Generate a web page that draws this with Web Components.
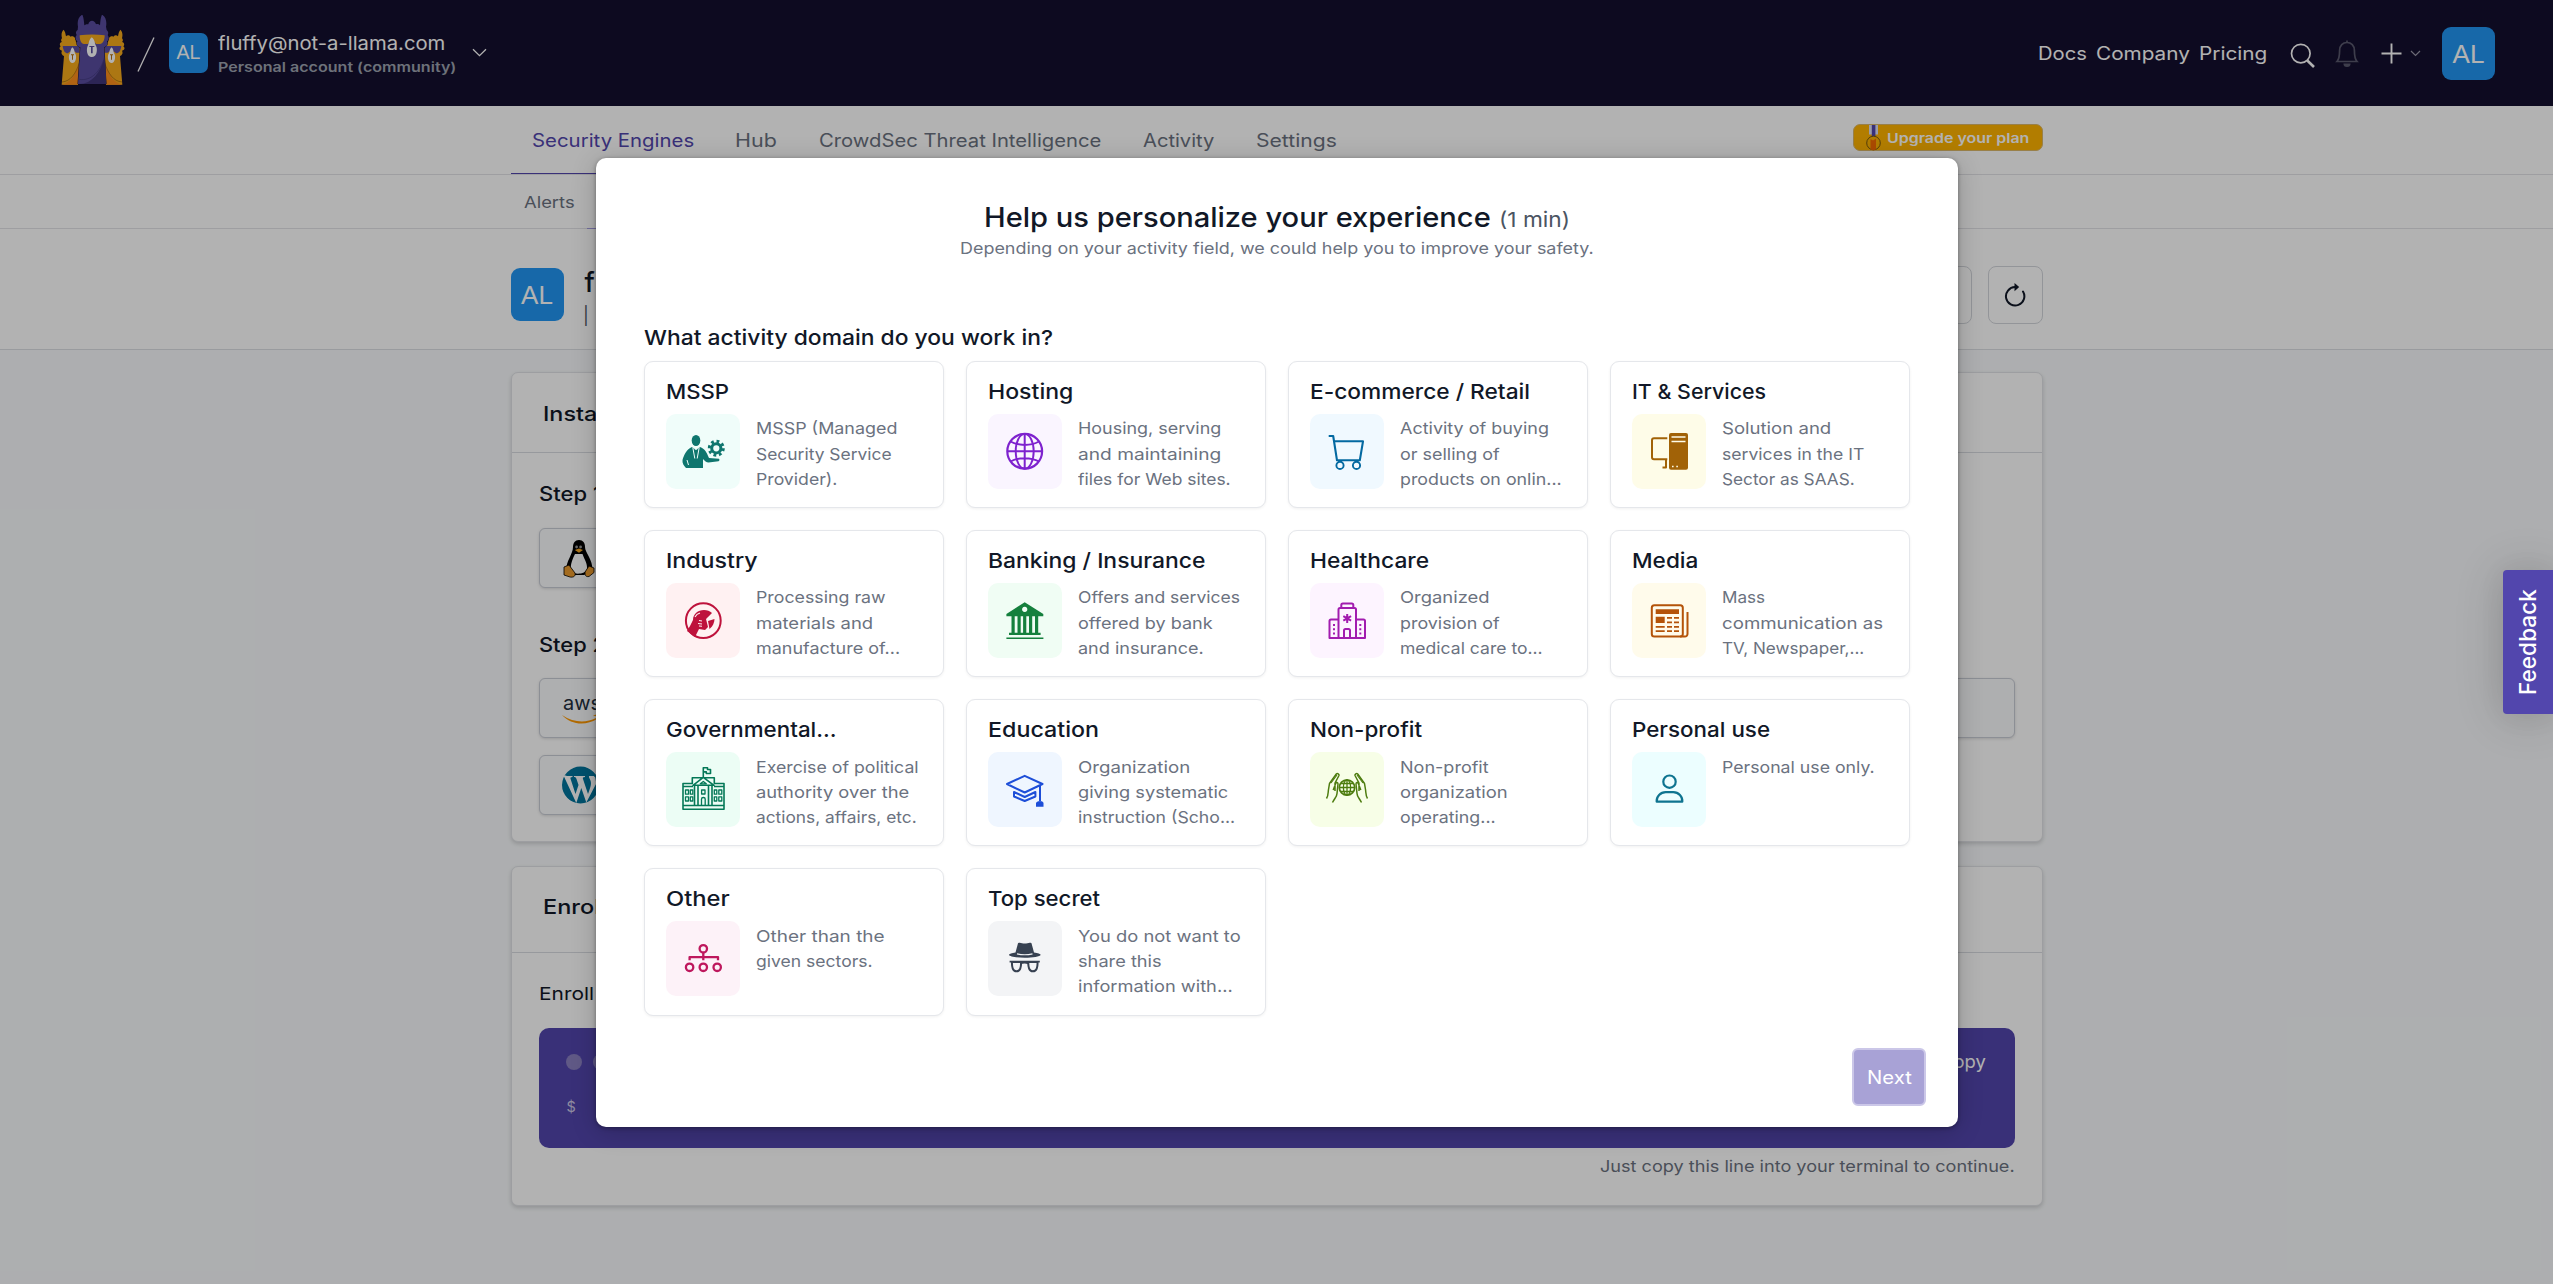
<!DOCTYPE html>
<html lang="en">
<head>
<meta charset="utf-8">
<title>CrowdSec Console</title>
<style>
  html, body { margin: 0; background: #fff; }
  body { font-family: Inter, "Open Sans", sans-serif; color: #111827; width: 2560px; height: 1288px; overflow: hidden; }
</style>
</head>
<body>
<console-app></console-app>

<script>
const define = (name, html, init) => {
  const tpl = document.createElement('template');
  tpl.innerHTML = html;
  customElements.define(name, class extends HTMLElement {
    connectedCallback() {
      if (this.shadowRoot) return;
      this.attachShadow({ mode: 'open' }).appendChild(tpl.content.cloneNode(true));
      if (init) init.call(this, this.shadowRoot);
    }
  });
};

/* Text whose letterforms are widened so that it spans a given width */
customElements.define('fit-text', class extends HTMLElement {
  connectedCallback() {
    if (this.shadowRoot) return;
    this.attachShadow({ mode: 'open' }).innerHTML =
      '<style>:host{display:block;white-space:pre;flex:none}span{display:inline-block;transform-origin:0 50%}</style><span><slot></slot></span>';
    const span = this.shadowRoot.querySelector('span');
    const w = +this.getAttribute('w');
    if (!w) return;
    const fs = parseFloat(getComputedStyle(this).fontSize);
    const natural = span.getBoundingClientRect().width;
    const full = w + fs * 0.1;
    span.style.transform = `scaleX(${(full / natural).toFixed(4)})`;
    this.style.width = full.toFixed(2) + 'px';
  }
});

define('avatar-tile', `
<style>
  :host { display: flex; align-items: center; justify-content: center; flex: none; background: #2196f3; color: #fff;
    font-family: "Liberation Sans", Arial, sans-serif; width: 53px; height: 53px; font-size: 26px; border-radius: 9px; line-height: 1; }
  :host([small]) { width: 39px; height: 40px; font-size: 19.5px; border-radius: 7px; }
</style>
<span><slot></slot></span>`);

define('llama-logo', `
<style>:host { display: block; width: 66px; height: 70px; flex: none } svg { display: block }</style>
<svg width="66" height="70" viewBox="27 15 198 210">
  <defs>
    <g id="side">
      <path fill="#f7ab1c" d="M36 85 C33 74 35 64 41 59 C45 64 47 72 48 79 C53 74 58 76 62 80 C66 77 72 79 75 84 L78 96 L88 104 L92 140 L84 224 H35 L42 138 C34 134 33 128 36 122 C28 121 26 113 32 109 C27 104 30 97 36 96 C32 92 33 88 36 85Z"/>
      <path fill="#fe8f1c" d="M35 224 C60 218 74 200 88 160 L84 224Z" />
      <path fill="none" stroke="#5a2d0c" stroke-width="1.2" d="M36 216 C62 214 78 190 88 158"/>
      <path fill="#594da0" d="M38 108 H88 L89 128 H78 C74 122 58 122 54 130 C44 130 40 122 38 108Z"/>
      <path fill="#fff" d="M67 112 C73 116 73 124 75 130 C80 136 79 150 74 156 C70 160 64 160 61 156 C56 150 55 136 60 130 C62 124 62 116 67 112Z"/>
      <path fill="#b8720f" d="M63 133 H72 V136 H69 V149 H66 V136 H63Z"/>
    </g>
  </defs>
  <use href="#side"/>
  <use href="#side" transform="matrix(-1 0 0 1 252 0)"/>
  <path fill="#594da0" stroke="#140f2e" stroke-width="3" paint-order="stroke" d="M84 50 C81 34 85 20 97 14 C101 22 102 36 103 46 C107 42 112 42 115 43 C116 36 121 32 126 32 C131 32 136 36 138 43 C142 41 147 43 150 46 C151 34 152 22 156 14 C168 21 171 36 168 50 L170 60 C175 64 176 70 173 75 C178 82 176 90 171 94 C174 102 170 110 162 112 L168 222 H84 L91 112 C82 110 78 102 82 94 C76 89 75 81 80 75 C76 69 78 63 83 60Z"/>
  <path fill="#40367a" d="M165 150 L169 222 H88 C126 220 150 190 165 140Z"/>
  <path fill="none" stroke="#332a66" stroke-width="1.2" d="M88 208 C124 214 152 184 164 140"/>
  <path fill="#f7ab1c" d="M89 76 C112 73 140 73 164 76 C164 92 158 102 150 102 H138 C134 92 118 92 114 102 H102 C94 102 89 92 89 76Z"/>
  <path fill="#fff" d="M125 82 C134 88 134 98 137 106 C143 114 141 132 135 137 C129 142 121 142 116 137 C110 131 109 115 114 106 C117 98 117 88 125 82Z"/>
  <path fill="#594da0" d="M118 108 H133 V111 H128 V130 H123 V111 H118Z"/>
</svg>`);

define('top-bar', `
<style>
  :host { display: flex; align-items: flex-start; height: 106px; background: #140f2e; color: #fff; box-sizing: border-box; padding: 0 58px 0 59px; font-size: 18.3px; line-height: 24px; }
  llama-logo { margin-top: 15px; }
  .slash { margin: 36px 14px 0 12px; }
  avatar-tile[small] { margin-top: 33px; }
  .who { margin: 31px 0 0 10px; width: 254px; }
  .name { font-size: 18.6px; }
  .plan { font-size: 13.4px; font-weight: 600; line-height: 20px; margin-top: 2px; color: #9ca3af; }
  .grow { flex: 1 }
  nav { display: flex; margin-top: 41px; gap: 9px; }
  svg { display: block; flex: none; fill: none; stroke: currentColor; }
  .account { margin: 27px 0 0 21px; }
</style>
<llama-logo></llama-logo>
<svg class="slash" width="18" height="36" viewBox="0 0 18 36" stroke-width="1.3"><path d="M1 35.5 17 1.5"/></svg>
<avatar-tile small>AL</avatar-tile>
<div class="who"><fit-text class="name" w="225.5">fluffy@not-a-llama.com</fit-text><fit-text class="plan" w="237">Personal account (community)</fit-text></div>
<svg style="margin-top:48px" width="15" height="9" viewBox="0 0 15 9" stroke-width="1.3"><path d="M1 1.2 7.5 7.6 14 1.2"/></svg>
<span class="grow"></span>
<nav><fit-text w="47">Docs</fit-text><fit-text w="92">Company</fit-text><fit-text w="66.5">Pricing</fit-text></nav>
<svg style="margin:43px 0 0 23px" width="26" height="26" viewBox="0 0 26 26"><circle cx="10.8" cy="10.6" r="9.3" stroke-width="1.7"/><path stroke-width="2.6" d="M17.3 17.5 24 24"/></svg>
<svg style="margin:39px 0 0 19px;color:#5a5a6e" width="24" height="29" viewBox="0 0 24 29"><path stroke-width="1.7" d="M12 1.5v1.6M2 22.5c1.8-2 2.6-5.5 2.6-11 0-4.8 3.2-8 7.4-8s7.4 3.2 7.4 8c0 5.5.8 9 2.6 11z"/><path fill="currentColor" stroke="none" d="M8.4 24.5h7.2a3.6 3.6 0 0 1-7.2 0z"/></svg>
<svg style="margin:43px 0 0 22px" width="21" height="21" viewBox="0 0 21 21" stroke-width="1.9"><path d="M10.5.5v20M.5 10.5h20"/></svg>
<svg style="margin:50px 0 0 8px;color:#9a98a8" width="11" height="7" viewBox="0 0 11 7" stroke-width="1.2"><path d="M1 1 5.5 5.5 10 1"/></svg>
<avatar-tile class="account">AL</avatar-tile>`);

define('nav-tabs', `
<style>
  :host { display: block; background: #fff; color: #6b7280; }
  .row { border-bottom: 1px solid #e2e3e7; }
  .inner { width: 1532px; margin: 0 auto; display: flex; position: relative; box-sizing: border-box; align-items: flex-start }
  .main .inner { height: 68px; padding-left: 21px; font-size: 18.3px; line-height: 26px; gap: 41.7px; padding-top: 21px }
  .main .on { color: #5246ad; }
  .main .inner::before, .sub .inner::before { content: ""; position: absolute; left: 0; bottom: 0; width: 202px; height: 1.5px; background: #5246ad; }
  .sub .inner { height: 53px; padding: 14px 0 0 13px; font-size: 16.4px; line-height: 26px; }
  .sub .inner::before { left: 76px; bottom: -1px; width: 120px; height: 1px; background: #a39be0; }
  .grow { flex: 1 }
  .up { display: flex; align-items: center; box-sizing: border-box; width: 190px; height: 27px; margin-top: -3px; border-radius: 7px; background: #ffb300; border: 1.5px solid #dcb869; color: #fff; font-size: 13.7px; font-weight: 600; padding-left: 12.5px; gap: 5.5px; }
</style>
<div class="row main"><div class="inner">
  <fit-text class="on" w="160.4">Security Engines</fit-text><fit-text w="40">Hub</fit-text><fit-text w="280.5">CrowdSec Threat Intelligence</fit-text><fit-text w="69.5">Activity</fit-text><fit-text w="79">Settings</fit-text>
  <span class="grow"></span>
  <span class="up"><svg width="15" height="26" viewBox="0 0 15 26"><path fill="#dfe1f5" d="M3 0h9v9.5H3z"/><path fill="#5246ad" d="M5.8 0h3.6v11.5H5.8z"/><circle cx="7.5" cy="18" r="6.8" fill="#ffb300" stroke="#7a5a10" stroke-width="1"/><path fill="#f56b00" d="M4.5 14 7 15.5 10 13.5v11c-2 1-4 .8-5.5 0z"/></svg><fit-text w="141">Upgrade your plan</fit-text></span>
</div></div>
<div class="row sub"><div class="inner"><fit-text w="49">Alerts</fit-text></div></div>`);

define('page-head', `
<style>
  :host { display: block; background: #fff; border-bottom: 1px solid #dcdee2; }
  .inner { width: 1532px; height: 120px; margin: 0 auto; display: flex; align-items: flex-start; }
  avatar-tile { margin-top: 39px; }
  .t { margin: 35px 0 0 21px; flex: 1 }
  .h { font-size: 27px; font-weight: 500; line-height: 38px; }
  .s { font-size: 17.5px; line-height: 26px; color: #4b5563; margin: 1px 0 0 -1.5px; }
  .b { margin: 37px 0 0 16px; width: 55px; height: 58px; border: 1px solid #d3d6db; border-radius: 8px; box-sizing: border-box; display: flex; align-items: center; justify-content: center; }
</style>
<div class="inner">
  <avatar-tile>AL</avatar-tile>
  <div class="t"><div class="h">f</div><div class="s">|</div></div>
  <div class="b"></div>
  <div class="b"><svg width="22" height="25" viewBox="0 0 22 25"><path fill="none" stroke="#111827" stroke-width="2" stroke-linecap="round" d="M19 8.5a9.2 9.2 0 1 1-8-4.4"/><path fill="#111827" d="M10.5 0v8.2L15.2 4.1z"/></svg></div>
</div>`);

define('panel-card', `
<style>
  :host { display: block; box-sizing: border-box; width: 1532px; margin: 0 auto 23.5px; background: #fff; border: 1px solid #e1e3e7; border-radius: 7px; box-shadow: 0 2px 4px rgba(0,0,0,.16); }
  header { height: var(--head, 80px); border-bottom: 1px solid #d9dce1; padding: 26.5px 0 0 31.5px; box-sizing: border-box; font-size: 20.3px; font-weight: 450; line-height: 28px; }
  section { padding: 0 27px; }
</style>
<header><slot name="title"></slot></header><section><slot></slot></section>`);

define('brand-tile', `
<style>
  :host { display: block; box-sizing: border-box; height: 60px; border: 1.5px solid #c9cdd6; border-radius: 6px; background: #fafbfc; box-shadow: 0 1px 3px rgba(0,0,0,.14); padding: 10px 0 0 22px; }
</style><slot></slot>`);

define('install-steps', `
<style>
  :host { display: block; height: 388px; }
  p { margin: 0; font-size: 20.3px; font-weight: 450; line-height: 28px; }
  .g { display: grid; grid-template-columns: repeat(4, 1fr); gap: 16.5px 24px; }
  svg { display: block }
  .aws { font-size: 20px; line-height: 20px; color: #232f3e; font-weight: 400; margin-top: 4px; padding-left: 1px; }
</style>
<p style="padding-top:26.5px"><fit-text w="61">Step 1</fit-text></p>
<div class="g" style="margin-top:20.5px"><brand-tile>
  <svg width="34" height="40" viewBox="0 0 34 40"><path fill="#000" d="M17 1c4 0 6 3 6 7 0 6 8 12 7.5 24L22 36h-9l-9-4C4 22 11 15 11 8c0-4 2-7 6-7z"/><path fill="#fff" d="M13 15h7.5c2 6 5 9 4.5 15-.5 5-12 6-15 3-3-4 0-12 3-18z"/><circle cx="14.6" cy="8" r="1.4" fill="#999"/><circle cx="18.6" cy="8" r="1.4" fill="#999"/><path fill="#f5a623" d="M12.8 11 17 9.5 21 11 17 13.8z"/><path fill="#ea9a2d" stroke="#000" stroke-width=".8" d="M2 28l5-2 6 8c1 4-3 4.5-5 4l-6-2zM32 29l-5-2-4 6c0 4 1 5 4 4.5l5-4z"/></svg>
</brand-tile></div>
<p style="padding-top:43px"><fit-text w="65">Step 2</fit-text></p>
<div class="g" style="margin-top:19px">
  <brand-tile><fit-text class="aws" w="36">aws</fit-text><svg width="40" height="14" viewBox="0 0 40 14" style="margin-top:-1px"><path fill="#f90" d="M0 3c12 8 24 8 34 3l1 1C24 14 9 13 0 3z"/><path fill="#f90" d="M31 4c3-2 6-1.5 7-1 .5 1.5-.5 4-2 6 .3-2 1-3.5.3-4-.8-.6-3-.8-5.3-1z"/></svg></brand-tile>
  <brand-tile></brand-tile><brand-tile></brand-tile><brand-tile></brand-tile>
  <brand-tile><svg width="37" height="38" viewBox="0 0 37 38"><circle cx="18.5" cy="19" r="18.5" fill="#00749c"/><path fill="#fff" d="M1.5 9.5h9v1.5c-2 .1-2.3.6-1.9 2l4.9 15 3-9-2-6c-.6-1.5-1-2-2.5-2V9.5h11V11c-2 .1-2.5.5-2 2l5 15c3-8 4-11 1.8-15-2-3.5 0-5.5 1.5-5.5l4 4 1 6-10 19-5-14.5-5 15z"/><path d="M4 10C11-2 27-2 33 10z" fill="#00749c"/><path fill="#00749c" d="M2.5 13 10.5 35.5A18.500 18.500 0 0 1 2.500 13z"/></svg></brand-tile>
</div>`);

define('enroll-box', `
<style>
  :host { display: block; height: 252.5px; }
  p { margin: 0; font-size: 17.8px; line-height: 26px; padding-top: 28px; }
  .term { margin-top: 21.5px; height: 120px; border-radius: 10px; background: #5246ad; color: #fff; box-sizing: border-box; padding: 21px 29px 0 27px; }
  .top { display: flex; align-items: center; gap: 11px; height: 26px; }
  i { width: 16px; height: 16px; border-radius: 50%; background: #8a80c0; }
  .copy { margin-left: auto; font-size: 18px; line-height: 26px; }
  .cmd { font-size: 14.5px; line-height: 20px; margin: 22px 0 0 1px; color: #cdc9e6; }
  .hint { display: flex; justify-content: flex-end; margin-top: 5px; font-size: 16.4px; line-height: 26px; color: #6b7280; }
</style>
<p><fit-text w="53.3">Enroll</fit-text></p>
<div class="term"><div class="top"><i></i><i></i><i></i><fit-text class="copy" w="44">Copy</fit-text></div><div class="cmd">$</div></div>
<div class="hint"><fit-text w="413">Just copy this line into your terminal to continue.</fit-text></div>`);

const ICONS = {
  mssp: ['#f0fdfa', '#0f766e', `<ellipse cx="30" cy="26.5" rx="4.3" ry="5.6" fill="currentColor" stroke="none"/>
    <path fill="currentColor" stroke="none" d="M26 33l4 3 4-3c5 2 6.5 5 9 11l10 .8c.8.9.5 2-.5 2.4l-10 1.2c-2-.2-4-1.5-5.5-3.5V54H20c-2-2-4-5-3.500-8 1.500-5 4-11 9.500-13z"/>
    <path stroke="#f0fdfa" stroke-width="1" d="M26.8 33.5l2 11M33.2 33.5l-2 11M21 46l1.5 5"/><path stroke="#f0fdfa" stroke-width=".9" d="M29.300 35.500l.7-1 .7 1"/>
    <circle cx="50.3" cy="34.3" r="4.6" stroke-width="3"/><circle cx="50.3" cy="34.3" r="7" stroke-width="3" stroke-dasharray="2.75 2.75"/>`],
  globe: ['#faf5ff', '#7e22ce', `<circle cx="36.7" cy="37.3" r="17.4" stroke-width="2.2"/><ellipse cx="36.7" cy="37.3" rx="9" ry="17.4" stroke-width="1.9"/><path stroke-width="2" d="M36.7 19.5v35.6M19 37.3h35.4M22.5 27.5c8 4.5 20.5 4.5 28.5 0M22.5 47.5c8-4.5 20.5-4.5 28.5 0"/>`],
  cart: ['#f0f9ff', '#0369a1', `<path stroke-width="2.1" d="M18.7 22h4.5L27 46.3h22.8L53 27.3H24"/><circle cx="30" cy="51.4" r="3.6" stroke-width="1.9"/><circle cx="46.5" cy="51.4" r="3.6" stroke-width="1.9"/>`],
  it: ['#fefce8', '#a16207', `<rect x="37" y="19" width="19" height="36.7" rx="2" fill="currentColor" stroke="none"/><path stroke="#fefce8" stroke-width="1.5" d="M39.5 23h14M39.5 27.5h14"/><path stroke="#fefce8" stroke-width="1.6" d="M40 52.5h1.6M44.3 52.5h1.6"/><path stroke-width="2" d="M35.3 24.3H22a2 2 0 0 0-2 2v17a2 2 0 0 0 2 2h13.3M34 46v7.5h-3.5"/>`],
  weld: ['#fff1f2', '#be123c', `<circle cx="37.3" cy="37.7" r="17.4" stroke-width="2"/><path fill="currentColor" stroke="none" d="M27 37c0-6 5-10 11-10 3 0 6 1 8 3l-6 6 2 8-3 3-6-1-4 8-8-6 3-5z"/><path fill="currentColor" stroke="none" d="M42 38l6.5-2c0 3.500-1.500 7-5 10z"/><path stroke="#fff1f2" stroke-width="1.1" d="M33 37.500l3 .5M32 40.500l4 .5M33 43l3 .3M29 34c1-2 3-3.500 5-4"/>`],
  bank: ['#f0fdf4', '#15803d', `<g fill="currentColor" stroke="none"><path fill-rule="evenodd" d="M36.7 19.3 55.3 31v2.3H18.4V31zM36.7 23.8a2.6 2.6 0 1 0 .01 0z"/><path d="M23.5 33h3.2v17h-3.2zM29.5 33h3.2v17h-3.2zM35.1 33h3.2v17h-3.2zM41 33h3.2v17H41zM47 33h3.2v17H47zM21 49.8h31.6v2.2H21zM18.4 54.6h37v1.5h-37z"/></g>`],
  hospital: ['#fdf4ff', '#a21caf', `<path stroke-width="2" d="M28.5 36.5h-7.5a1.5 1.5 0 0 0-1.5 1.5v17H55V38a1.5 1.5 0 0 0-1.5-1.5H46M28.5 55V26.5a1.5 1.5 0 0 1 1.5-1.5h14.5a1.5 1.5 0 0 1 1.5 1.5V55M31.3 25v-3a1.5 1.5 0 0 1 1.5-1.5h9a1.5 1.5 0 0 1 1.5 1.5v3M34 55v-7.5a1.5 1.5 0 0 1 1.5-1.5h3a1.5 1.5 0 0 1 1.5 1.5V55M37.2 31v9M33.3 33.2l7.8 4.5M33.3 37.7l7.8-4.5"/><path stroke-width="2" stroke-dasharray="2 2.2" d="M24 41v11M50.3 41v11"/>`],
  news: ['#fffbeb', '#b45309', `<rect x="19.8" y="22.3" width="31" height="31.3" rx="2.5" stroke-width="2"/><path stroke-width="2" d="M48 53.6h5a2.5 2.5 0 0 0 2.5-2.5V29"/><g fill="currentColor" stroke="none"><path d="M23.7 26.3H47V31H23.7zM23.7 33.8h9v6.2h-9z"/></g><path stroke-width="1.8" d="M35 34.8h5M42 34.8h5M35 39.3h5M42 39.3h5M23.7 43.8h9M35 43.8h5M42 43.8h5M23.7 48.2h9M35 48.2h5M42 48.2h5"/>`],
  gov: ['#ecfdf5', '#047857', `<path stroke-width="1.6" d="M17 31.5h9.3v-5.7h22v5.7H58v25.7H17zM27 33.3l10.3-8 10.7 8zM37.3 25.5V15.8h4.2v1.7h3v4h-4.2v-1.6h-3M17 34.5h10M48 34.5h10M17 53.5h41M28.5 34v19.5M32 34v19.5M42.5 34v19.5M46 34v19.5"/><path stroke-width="1.3" d="M19.5 38h3v4.2h-3zM19.5 44.8h3V49h-3zM24.3 38h2.5v4.2h-2.5zM24.3 44.8h2.5V49h-2.5zM35.6 38h3.4v4h-3.4zM35.5 53.5v-6.5c0-2 3.7-2 3.7 0v6.5M48.3 38h2.5v4.2h-2.5zM52.8 38h3v4.2h-3zM48.3 44.8h2.5V49h-2.5zM52.8 44.8h3V49h-3zM37.3 29.5l3 2.3h-6z"/>`],
  edu: ['#eff6ff', '#1d4ed8', `<path stroke-width="2" d="M36.7 23.8 54.5 32 36.7 40.5 19 32zM26 40l10.7 5 10.7-5v4.5L36.7 49 26 44.5zM52 33.5v16"/><path fill="currentColor" stroke="none" d="M50 49.3h4l1.5 1.5v4H48v-4z"/>`],
  hands: ['#f7fee7', '#4d7c0f', `<circle cx="37" cy="35.5" r="7.7" stroke-width="1.7"/><ellipse cx="37" cy="35.5" rx="3.6" ry="7.7" stroke-width="1.3"/><path stroke-width="1.3" d="M37 28v15M29.5 35.5h15M31 31.5h12M31 39.5h12"/><path stroke-width="1.5" d="M16.5 46.5c2-3 1.5-6 2-9l1-6 6.8-9.5c1.2-1.2 3 .2 2.7 1.5L25 31v8M22.5 50.5c2-4 4.5-6 4.5-9l1-9.5c0-1.8-1.7-1.8-2.3-.5l-2.5 6.500M57.500 46.500c-2-3-1.500-6-2-9l-1-6L47.700 22c-1.200-1.200-3 .2-2.700 1.500L49 31v8M51.500 50.500c-2-4-4.500-6-4.500-9L46 32c0-1.800 1.700-1.800 2.300-.5l2.500 6.500"/><path stroke-width="1.1" d="M21 31l6-8M53 31l-6-8"/>`],
  user: ['#ecfeff', '#0e7490', `<circle cx="37.5" cy="29.7" r="6.2" stroke-width="2.2"/><path stroke-width="2.2" d="M24.7 49.7c-.5-5 3.8-9.5 9-9.5h7.6c5.2 0 9.5 4.5 9 9.5z"/>`],
  tree: ['#fdf2f8', '#be185d', `<g stroke-width="2.3"><circle cx="37.3" cy="27.8" r="3.7"/><circle cx="23.6" cy="46.3" r="3.7"/><circle cx="37.3" cy="46.3" r="3.7"/><circle cx="51.2" cy="46.3" r="3.7"/><path d="M37.3 32v7.3M23.6 39.3v-3.2H52v3.2"/></g>`],
  spy: ['#f3f4f6', '#374151', `<path fill="currentColor" stroke="none" d="M30 22.3c2-1.3 4 .3 6.7.3s5-1.6 6.8-.3L46 31.5c4 .6 6.5 1.5 6.7 2.3-.5 1.9-8 3-15.9 3s-15.4-1.100-15.900-3c.2-.8 3-1.700 6.600-2.300z"/><path stroke="#f3f4f6" stroke-width="1.2" d="M29 32.8c5 1.2 10.5 1.2 15.500 0"/><path stroke-width="1.7" d="M21.6 40.6h30.2M32.5 42.5c2.5-1.2 5.5-1.2 8 0"/><path stroke-width="2" d="M24 41h9c.3 5-.8 9.3-4.5 9.3S23.7 46 24 41zM40.3 41h9.2c.3 5-.8 9.3-4.6 9.3s-4.8-4.3-4.6-9.3z"/>`]
};

define('domain-card', `
<style>
  :host { display: block; box-sizing: border-box; height: 147.3px; border: 1.3px solid #e5e7eb; border-radius: 9px; background: #fff; box-shadow: 0 1px 3px rgba(0,0,0,.06); padding: 15.5px 0 0 20.7px; color: #111827; }
  .title { font-size: 20.7px; font-weight: 450; line-height: 28px; }
  .row { display: flex; gap: 16.7px; margin-top: 8.5px; }
  .pic { width: 74px; height: 75px; border-radius: 10px; flex: none; }
  svg { display: block; fill: none; stroke: currentColor; stroke-linejoin: round; }
  .desc { font-size: 16.5px; line-height: 25.4px; color: #6b7280; padding-top: 2.4px; }
</style>
<div class="title"></div>
<div class="row"><div class="pic"></div><div class="desc"></div></div>`, function (root) {
  const [name, w] = this.dataset.title.split('|');
  const [bg, fg, art] = ICONS[this.dataset.icon];
  root.querySelector('.title').append(line(name, w));
  const pic = root.querySelector('.pic');
  pic.style.cssText = `background:${bg};color:${fg}`;
  pic.innerHTML = `<svg width="74" height="75" viewBox="0 0 74 75">${art}</svg>`;
  this.dataset.lines.split(';').forEach(l => root.querySelector('.desc').append(line(...l.split('|'))));
});

function line(text, w) {
  const el = document.createElement('fit-text');
  el.textContent = text;
  el.setAttribute('w', w);
  return el;
}

const DOMAINS = [
  ['mssp', 'MSSP|61', 'MSSP (Managed|139.7;Security Service|134;Provider).|79.7'],
  ['globe', 'Hosting|83.3', 'Housing, serving|141.6;and maintaining|141.6;files for Web sites.|151'],
  ['cart', 'E-commerce / Retail|218', 'Activity of buying|147.3;or selling of|98;products on onlin...|160'],
  ['it', 'IT & Services|132', 'Solution and|107.6;services in the IT|140.6;Sector as SAAS.|131'],
  ['weld', 'Industry|89.5', 'Processing raw|128;materials and|115.5;manufacture of...|142.5'],
  ['bank', 'Banking / Insurance|215.5', 'Offers and services|160.4;offered by bank|133;and insurance.|124'],
  ['hospital', 'Healthcare|117', 'Organized|88;provision of|98;medical care to...|141'],
  ['news', 'Media|64.3', 'Mass|41.5;communication as|159.4;TV, Newspaper,...|140.6'],
  ['gov', 'Governmental...|168.5', 'Exercise of political|161;authority over the|151.5;actions, affairs, etc.|159'],
  ['edu', 'Education|109', 'Organization|110.6;giving systematic|148.6;instruction (Scho...|155.5'],
  ['hands', 'Non-profit|110', 'Non-profit|87;organization|106;operating...|94'],
  ['user', 'Personal use|136', 'Personal use only.|151'],
  ['tree', 'Other|61.7', 'Other than the|127;given sectors.|115'],
  ['spy', 'Top secret|110', 'You do not want to|161;share this|82;information with...|153']
];

define('survey-modal', `
<style>
  :host { position: absolute; inset: 0; background: rgba(0,0,0,.3); display: block; }
  .box { width: 1362px; height: 969px; margin: 158px 0 0 596px; box-sizing: border-box; background: #fff; border-radius: 10px; padding: 42px 48px 0; box-shadow: 0 4px 26px rgba(0,0,0,.2), 0 1px 4px rgba(0,0,0,.35); }
  .head { display: flex; justify-content: center; align-items: baseline; gap: 8px; font-size: 27.3px; font-weight: 450; line-height: 36px; height: 36px; }
  .head .min { font-size: 20.5px; font-weight: 400; color: #4b5563; }
  .sub { display: flex; justify-content: center; font-size: 16.4px; line-height: 26px; color: #6b7280; margin-top: -1px; }
  .q { font-size: 20.5px; font-weight: 450; line-height: 28px; margin: 62.5px 0 9.5px; }
  .grid { display: grid; grid-template-columns: repeat(4, 300px); gap: 21.8px 22px; }
  .foot { display: flex; justify-content: flex-end; margin: 32px -16px 0 0; }
  .next { box-sizing: border-box; width: 74px; height: 58px; border: 2px solid #cbc7e8; border-radius: 6px; background: #a8a2d6; color: #fff; font-size: 18.2px; line-height: 54px; display: flex; justify-content: center; }
</style>
<div class="box">
  <div class="head"><fit-text w="504">Help us personalize your experience</fit-text><fit-text class="min" w="69">(1 min)</fit-text></div>
  <div class="sub"><fit-text w="632">Depending on your activity field, we could help you to improve your safety.</fit-text></div>
  <div class="q"><fit-text w="407">What activity domain do you work in?</fit-text></div>
  <div class="grid"></div>
  <div class="foot"><div class="next"><fit-text w="43">Next</fit-text></div></div>
</div>`, root => {
  const grid = root.querySelector('.grid');
  for (const [icon, title, lines] of DOMAINS) {
    const c = document.createElement('domain-card');
    Object.assign(c.dataset, { icon, title, lines });
    grid.append(c);
  }
});

define('feedback-tab', `
<style>
  :host { position: absolute; right: 0; top: 570px; width: 50px; height: 144px; background: #5246ad; color: #fff; border-radius: 4px 0 0 4px; box-shadow: 0 2px 50px rgba(0,0,0,.16), 0 2px 28px rgba(0,0,0,.06); display: flex; align-items: center; justify-content: center; }
  span { writing-mode: vertical-rl; transform: rotate(180deg); font-size: 22.5px; font-weight: 500; line-height: 30px; letter-spacing: .1px; }
</style><span>Feedback</span>`);

define('console-app', `
<style>
  :host { display: block; position: relative; width: 2553px; height: 1284px; overflow: hidden; background: #f8fafc; }
  main { padding-top: 22px; }
</style>
<top-bar></top-bar>
<nav-tabs></nav-tabs>
<page-head></page-head>
<main>
  <panel-card><fit-text slot="title" w="64">Install</fit-text><install-steps></install-steps></panel-card>
  <panel-card style="--head:86px"><fit-text slot="title" w="61">Enroll</fit-text><enroll-box></enroll-box></panel-card>
</main>
<survey-modal></survey-modal>
<feedback-tab></feedback-tab>`);
</script>
</body>
</html>
